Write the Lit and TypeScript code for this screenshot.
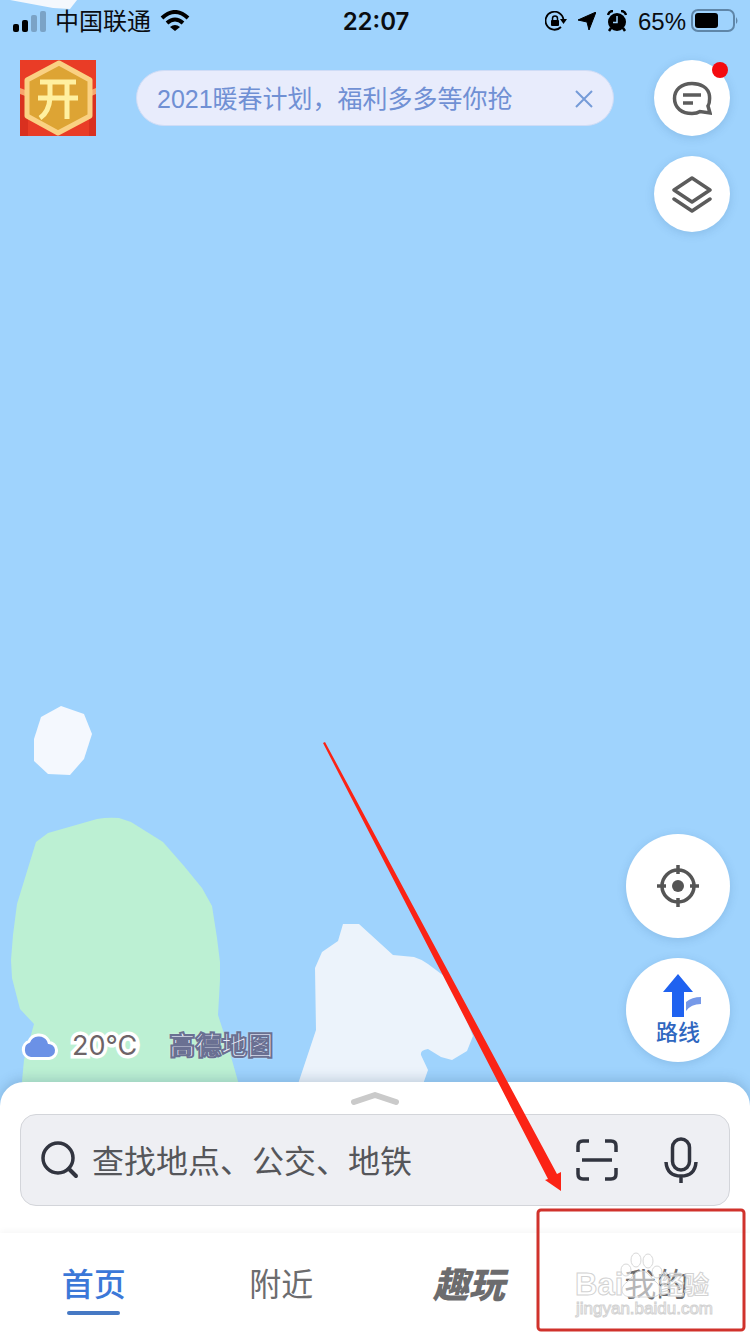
import { LitElement, html, css } from "lit";
import { customElement, state } from "lit/decorators.js";
import { classMap } from "lit/directives/class-map.js";

@customElement("map-canvas")
class MapCanvas extends LitElement {
  static styles = css`
    :host { display: block; }
    .land { display: block; width: 100%; height: 100%; }
  `;
  render() {
    return html`<svg class="land" viewBox="0 0 750 1334" preserveAspectRatio="xMidYMid slice" aria-hidden="true">
      <rect width="750" height="1334" fill="#9fd3fd" />
      <path d="M10 0H77L70 9L53 8Z" fill="#f4f8fd" />
      <path d="M61 706L84 714L92 734L84 759L70 775L48 774L34 761V739L41 717Z" fill="#f4f8fe" />
      <path d="M36 842L48 833L97 819Q108 817 119 818L131 822L163 842L184 866L202 888L212 906L217 938L220 962V980L218 1015L228 1046L241 1092H21L24 1060L34 1024L20 1009L12 978L11 960L13 935L17 904Z" fill="#bcf0d3" />
      <path d="M343 924H359L393 955L414 957Q421 959 428 964L444 976L454 990L473 1036L467 1051L452 1060L441 1057L428 1049Q420 1050 421 1055L428 1070L421 1090H296L316 1030L315 968L322 952L338 941Z" fill="#ecf3fb" />
    </svg>`;
  }
}

@customElement("status-bar")
class StatusBar extends LitElement {
  static styles = css`
    :host {
      display: grid;
      grid-template-columns: 1fr auto 1fr;
      align-items: center;
      height: 40px;
      padding: 0 11px 0 13px;
      color: #0a0c10;
      font-size: 24px;
      line-height: 40px;
      white-space: nowrap;
    }
    svg { display: block; flex: none; }
    .left, .right { display: flex; align-items: center; }
    .left { gap: 9px; }
    .right { gap: 11px; justify-content: flex-end; }
    .carrier, .time, .level { padding-top: 2px; }
    .time { font-weight: 600; }
    .power { display: flex; align-items: center; gap: 5px; }
    .level { font-family: "Liberation Sans", sans-serif; }
  `;
  render() {
    return html`
      <div class="left">
        <svg width="33" height="22" viewBox="0 0 33 22">
          <rect x="0" y="14" width="6" height="8" rx="2" />
          <rect x="9" y="10" width="6" height="12" rx="2" />
          <rect x="18" y="5" width="6" height="17" rx="2" fill="#7ba3c6" />
          <rect x="27" y="1" width="6" height="21" rx="2" fill="#7ba3c6" />
        </svg>
        <span class="carrier">中国联通</span>
        <svg width="30" height="22" viewBox="0 0 30 22">
          <path d="M2 8Q15 -4 28 8" fill="none" stroke="#000" stroke-width="4" />
          <path d="M7 13Q15 6 23 13" fill="none" stroke="#000" stroke-width="4" />
          <path d="M15 21L10 17Q15 13 20 17Z" />
        </svg>
      </div>
      <span class="time">22:07</span>
      <div class="right">
        <svg width="22" height="20" viewBox="0 0 22 20">
          <path d="M16 16A9 9 0 1 1 18.500 9" fill="none" stroke="#000" stroke-width="1.800" />
          <path d="M15 8H22L18.500 13Z" />
          <rect x="6" y="9" width="8" height="6" rx="1" />
          <path d="M7.500 10V7.500a2.500 2.500 0 0 1 5 0V10" fill="none" stroke="#000" stroke-width="1.500" />
        </svg>
        <svg width="18" height="18" viewBox="0 0 18 18"><path d="M18 0L11 18L9 10L0 8Z" stroke="#000" stroke-linejoin="round" /></svg>
        <svg width="20" height="22" viewBox="0 0 20 22">
          <circle cx="10" cy="12" r="9" />
          <path d="M1 5Q2 1 6 1M19 5Q18 1 14 1" fill="none" stroke="#000" stroke-width="2.500" />
          <path d="M4 18L2 21M16 18L18 21" stroke="#000" stroke-width="2.500" />
          <path d="M10 6V12.500H6" fill="none" stroke="#9fd3fd" stroke-width="1.500" />
        </svg>
        <div class="power">
          <span class="level">65%</span>
          <svg width="48" height="24" viewBox="0 0 48 24">
            <rect x="1" y="1" width="42" height="21" rx="6" fill="none" stroke="#5f86a8" stroke-width="2" />
            <rect x="4" y="4" width="23" height="15" rx="3" />
            <path d="M45 8Q48 12 45 15Z" fill="#5f86a8" />
          </svg>
        </div>
      </div>
    `;
  }
}

@customElement("tab-bar")
class TabBar extends LitElement {
  @state() private active = "home";
  private tabs = [
    { id: "home", label: "首页" },
    { id: "near", label: "附近" },
    { id: "play", label: "趣玩" },
    { id: "mine", label: "我的" },
  ];
  static styles = css`
    :host {
      display: grid;
      grid-template-columns: repeat(4, 1fr);
      background: #fff;
      box-shadow: 0 -2px 6px rgba(0, 0, 0, 0.04);
    }
    .tab {
      box-sizing: border-box;
      display: flex;
      flex-direction: column;
      align-items: center;
      gap: 2px;
      height: 101px;
      padding: 28px 0 0;
      border: 0;
      background: none;
      color: #6c6c6e;
      font: inherit;
      font-size: 32px;
      line-height: 48px;
    }
    .tab::after {
      content: "";
      width: 53px;
      height: 4px;
      border-radius: 2px;
    }
    .active { color: #3b78d8; font-weight: 500; }
    .active::after { background: #4679c4; }
    .play { font-size: 36px; font-weight: 900; font-style: italic; }
  `;
  render() {
    return this.tabs.map(
      (t) => html`<button
        class=${classMap({ tab: true, active: t.id === this.active, play: t.id === "play" })}
        @click=${() => (this.active = t.id)}
      >${t.label}</button>`,
    );
  }
}

@customElement("guide-marks")
class GuideMarks extends LitElement {
  static styles = css`
    :host { display: block; pointer-events: none; }
    .marks { display: block; width: 100%; height: 100%; }
    .mark {
      font-family: "Liberation Sans", "Noto Sans CJK SC", sans-serif;
      fill: #fff;
      fill-opacity: 0.5;
      stroke: #d2d2d2;
      stroke-width: 1px;
    }
    .brand { font-size: 31px; font-weight: 700; }
    .brand-cn { font-size: 25px; font-weight: 700; }
    .site { font-size: 17px; }
  `;
  render() {
    return html`<svg class="marks" viewBox="0 0 750 1334" preserveAspectRatio="xMidYMax meet">
      <g fill="#fff" fill-opacity="0.5" stroke="#d8d8d8" stroke-width="1">
        <ellipse cx="636" cy="1260" rx="5" ry="7" />
        <ellipse cx="648" cy="1261" rx="5" ry="7" />
        <ellipse cx="626" cy="1270" rx="5" ry="6" />
        <ellipse cx="657" cy="1272" rx="5" ry="6" />
        <path d="M641 1271C634 1271 633 1278 627 1282C618 1289 622 1297 631 1297H651C661 1297 664 1289 656 1282C650 1278 649 1271 641 1271Z" />
      </g>
      <g class="mark">
        <text class="brand" x="575" y="1295">Bai</text>
        <text class="brand-cn" x="659" y="1294">经验</text>
        <text class="site" x="576" y="1314">jingyan.baidu.com</text>
      </g>
      <path d="M323 743L325 742L557 1174L561 1172V1191L545 1180L548 1179Z" fill="#fb2315" />
      <rect x="538" y="1210" width="206" height="120" rx="3" fill="none" stroke="#d0322c" stroke-width="3" />
    </svg>`;
  }
}

@customElement("app-root")
class AppRoot extends LitElement {
  static styles = css`
    :host {
      position: relative;
      display: flex;
      flex-direction: column;
      min-height: 100vh;
      overflow: hidden;
      isolation: isolate;
      background: #9fd3fd;
      font-family: Inter, "Noto Sans CJK SC", sans-serif;
    }
    * { box-sizing: border-box; }
    svg { display: block; flex: none; }
    button { font: inherit; border: 0; padding: 0; cursor: pointer; }
    .backdrop { position: absolute; inset: 0; z-index: -1; }
    .overlay { position: absolute; inset: 0; }
    .top {
      display: grid;
      grid-template-columns: 76px 1fr 76px;
      gap: 40px;
      align-items: start;
      padding: 20px;
    }
    .promo { background: none; }
    .notice {
      display: flex;
      align-items: center;
      justify-content: space-between;
      height: 56px;
      margin-top: 10px;
      padding: 2px 20px 0;
      border: 1px solid #cfdcf6;
      border-radius: 28px;
      background: #e8ecfc;
      color: #7090d4;
      font-family: "Liberation Sans", "Noto Sans CJK SC", sans-serif;
      font-size: 25px;
      line-height: 36px;
      white-space: nowrap;
    }
    .close { background: none; }
    .stack { display: flex; flex-direction: column; gap: 20px; }
    .round {
      position: relative;
      display: flex;
      flex-direction: column;
      align-items: center;
      justify-content: center;
      width: 76px;
      height: 76px;
      border-radius: 50%;
      background: #fff;
      box-shadow: 0 2px 10px rgba(40, 90, 140, 0.18);
    }
    .big { width: 104px; height: 104px; }
    .dot {
      position: absolute;
      top: 2px;
      right: 2px;
      width: 16px;
      height: 16px;
      border-radius: 50%;
      background: #f40b10;
    }
    .route { color: #2f67c0; font-size: 22px; font-weight: 500; line-height: 28px; }
    .bottom {
      display: flex;
      align-items: flex-end;
      justify-content: space-between;
      margin-top: auto;
      padding: 20px;
    }
    .weather { display: flex; align-items: center; height: 32px; gap: 14px; color: #6d6468; }
    .temp {
      font-size: 27px;
      line-height: 34px;
      -webkit-text-stroke: 7px #fff;
      paint-order: stroke;
      stroke-linejoin: round;
    }
    .logo {
      margin-left: 18px;
      color: #e9ecf8;
      font-size: 26px;
      font-weight: 700;
      line-height: 34px;
      -webkit-text-stroke: 2px #6a7092;
      text-shadow: 0 0 3px #fff;
    }
    .sheet {
      padding: 8px 20px 27px;
      border-radius: 24px 24px 0 0;
      background: #fff;
      box-shadow: 0 -3px 12px rgba(40, 80, 120, 0.22);
    }
    .handle { display: flex; justify-content: center; width: 100%; height: 24px; background: none; }
    .search {
      display: flex;
      align-items: center;
      height: 92px;
      padding: 0 30px 0 20px;
      border: 1px solid #d3d5da;
      border-radius: 16px;
      background: #eeeff3;
    }
    .field {
      flex: 1;
      min-width: 0;
      height: 50px;
      margin: 0 11px;
      padding: 2px 0 0;
      border: 0;
      outline: 0;
      background: none;
      color: #4d4d50;
      font: inherit;
      font-size: 32px;
      line-height: 48px;
    }
    .field::placeholder { color: #55565a; opacity: 1; }
    .tools { display: flex; align-items: center; gap: 45px; }
    .tool { background: none; }
  `;
  render() {
    return html`
      <map-canvas class="backdrop"></map-canvas>
      <status-bar></status-bar>
      <div class="top">
        <button class="promo" aria-label="开">
          <svg width="76" height="76" viewBox="0 0 76 76">
            <rect width="76" height="76" fill="#e93c26" />
            <path d="M0 34L8 36V76H0ZM76 34L69 36V76H76Z" fill="#d9301f" />
            <path d="M0 28L8 31V37L0 34ZM76 28L69 31V37L76 34Z" fill="#f7a56d" />
            <path d="M39 3L70 20V56L38 73L7 56V20Z" fill="#dda434" stroke="#fad183" stroke-width="5" stroke-linejoin="round" />
            <path d="M20 22H56M18 38H58M30 22V38Q29 52 20 58M47 22V59" fill="none" stroke="#fff0a0" stroke-width="5" />
          </svg>
        </button>
        <div class="notice">
          <span>2021暖春计划，福利多多等你抢</span>
          <button class="close" aria-label="关闭">
            <svg width="18" height="18" viewBox="0 0 18 18"><path d="M1 1L17 17M17 1L1 17" stroke="#759bd8" stroke-width="2" /></svg>
          </button>
        </div>
        <div class="stack">
          <button class="round" aria-label="消息">
            <svg width="40" height="36" viewBox="0 0 40 36">
              <path d="M38 33L36 26Q38 23 37.500 16C36.500 7 28 3.500 20 3.500C9 3.500 2.500 10 2.500 18.500C2.500 28 10 33.500 20 33.500Q25 33.500 28 31.500Z" fill="none" stroke="#5c5c5c" stroke-width="3.500" />
              <path d="M11 15H29M11 23H21" stroke="#5c5c5c" stroke-width="3.500" />
            </svg>
            <span class="dot"></span>
          </button>
          <button class="round" aria-label="图层">
            <svg width="40" height="38" viewBox="0 0 40 38">
              <path d="M20 3L38 15L20 27L2 15Z" fill="none" stroke="#5c5c5c" stroke-width="3.500" stroke-linejoin="round" />
              <path d="M2 24L20 36L38 24" fill="none" stroke="#5c5c5c" stroke-width="3.500" stroke-linecap="round" stroke-linejoin="round" />
            </svg>
          </button>
        </div>
      </div>
      <div class="bottom">
        <div class="weather">
          <svg width="38" height="30" viewBox="0 0 38 30">
            <path d="M11 26a7.500 7.500 0 0 1-1-14.500a9.500 9.500 0 0 1 17-1.500l1 3a6.500 6.500 0 0 1 1 13Z" fill="#6b91e6" stroke="#fff" stroke-width="6" paint-order="stroke" stroke-linejoin="round" />
          </svg>
          <span class="temp">20°C</span>
          <span class="logo">高德地图</span>
        </div>
        <div class="stack">
          <button class="round big" aria-label="定位">
            <svg width="42" height="42" viewBox="0 0 42 42">
              <circle cx="21" cy="21" r="16" fill="none" stroke="#555" stroke-width="3.500" />
              <circle cx="21" cy="21" r="6" fill="#555" />
              <path d="M21 0V9M21 33V42M0 21H9M33 21H42" stroke="#555" stroke-width="3.500" />
            </svg>
          </button>
          <button class="round big">
            <svg width="46" height="44" viewBox="0 0 46 44">
              <path d="M23 0L38 18H29V43H17V18H8Z" fill="#1f62f0" />
              <path d="M31 28Q37 23 46 23V30Q36 30 31 37Z" fill="#7699e8" />
            </svg>
            <span class="route">路线</span>
          </button>
        </div>
      </div>
      <div class="sheet">
        <button class="handle" aria-label="展开">
          <svg width="50" height="16" viewBox="0 0 50 16"><path d="M4 12L25 5L46 12" fill="none" stroke="#cacaca" stroke-width="6" stroke-linecap="round" stroke-linejoin="round" /></svg>
        </button>
        <div class="search">
          <svg width="40" height="40" viewBox="0 0 40 40">
            <circle cx="17" cy="18" r="15" fill="none" stroke="#31343f" stroke-width="3.500" />
            <path d="M28 29L35 36" stroke="#31343f" stroke-width="4" stroke-linecap="round" />
          </svg>
          <input class="field" type="text" aria-label="搜索" placeholder="查找地点、公交、地铁" />
          <div class="tools">
            <button class="tool" aria-label="扫一扫">
              <svg width="42" height="42" viewBox="0 0 42 42">
                <path d="M2 13V7Q2 2 7 2H13M29 2H35Q40 2 40 7V13M40 29V35Q40 40 35 40H29M13 40H7Q2 40 2 35V29M6 21H36" fill="none" stroke="#31343f" stroke-width="3.500" />
              </svg>
            </button>
            <button class="tool" aria-label="语音">
              <svg width="36" height="48" viewBox="0 0 36 48">
                <rect x="9.500" y="3" width="17" height="31" rx="8.500" fill="none" stroke="#31343f" stroke-width="3.500" />
                <path d="M3 26Q4 40 18 40Q32 40 33 26M18 40V47" fill="none" stroke="#31343f" stroke-width="3.500" />
              </svg>
            </button>
          </div>
        </div>
      </div>
      <tab-bar></tab-bar>
      <guide-marks class="overlay"></guide-marks>
    `;
  }
}
